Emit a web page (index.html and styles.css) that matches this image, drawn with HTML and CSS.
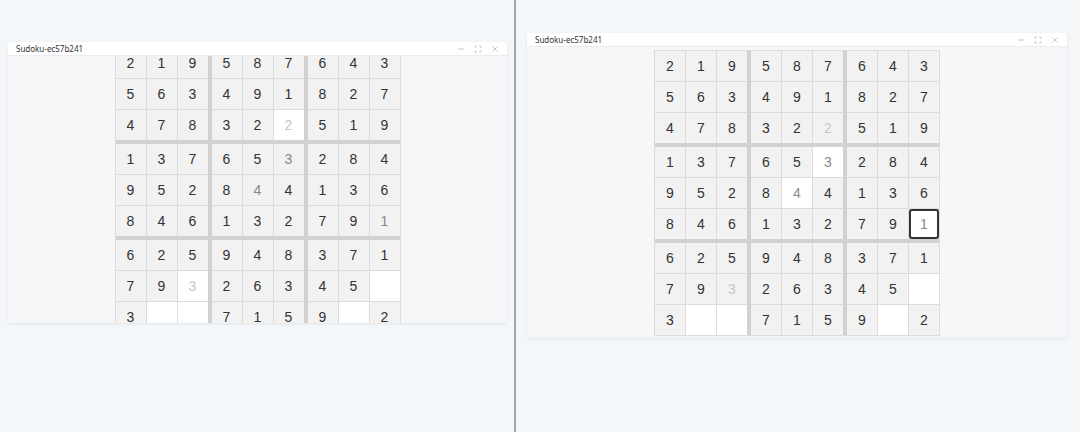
FILE: index.html
```html
<!DOCTYPE html>
<html lang="en">

<head>
    <meta charset="UTF-8">
    <title>Sudoku windows</title>
    <link rel="stylesheet" href="styles.css">
    <script>
        document.addEventListener("DOMContentLoaded", function () {
            const rows = [
                "219587643",
                "563491827",
                "478322519",
                "137653284",
                "952844136",
                "846132791",
                "625948371",
                "79326345.",
                "3..7159.2"
            ];
            const marks = {
                left: { "3,6": "open faint", "4,6": "soft", "5,5": "soft", "6,9": "soft", "8,3": "open faint" },
                right: { "3,6": "faint", "4,6": "open soft", "5,5": "open soft", "6,9": "open soft picked", "8,3": "faint" }
            };

            document.querySelectorAll('.board').forEach(board => {
                const set = marks[board.dataset.state];
                const boxes = [];
                for (let b = 0; b < 9; b++) {
                    const box = document.createElement('div');
                    box.classList.add('box');
                    board.appendChild(box);
                    boxes.push(box);
                }
                rows.forEach((row, r) => {
                    row.split('').forEach((ch, c) => {
                        const cell = document.createElement('div');
                        cell.className = 'cell';
                        if (ch === '.') {
                            cell.classList.add('open');
                        } else {
                            cell.textContent = ch;
                        }
                        const extra = set[(r + 1) + ',' + (c + 1)];
                        if (extra) extra.split(' ').forEach(k => cell.classList.add(k));
                        boxes[Math.floor(r / 3) * 3 + Math.floor(c / 3)].appendChild(cell);
                    });
                });
            });
        });
    </script>
</head>

<body>
    <div class="pane pane-left">
        <div class="window window-small">
            <div class="titlebar">
                <span class="title">Sudoku-ec57b241</span>
                <div class="controls">
                    <svg width="8" height="8" viewBox="0 0 8 8"><path d="M1 4h6" stroke="currentColor" stroke-width="0.9"/></svg>
                    <svg width="8" height="8" viewBox="0 0 8 8"><path d="M1 3V1h2M5 1h2v2M7 5v2H5M3 7H1V5" stroke="currentColor" stroke-width="0.8" fill="none"/></svg>
                    <svg width="8" height="8" viewBox="0 0 8 8"><path d="M1.5 1.5l5 5M6.5 1.5l-5 5" stroke="currentColor" stroke-width="0.9"/></svg>
                </div>
            </div>
            <div class="window-body">
                <div class="board" data-state="left"></div>
            </div>
        </div>
    </div>
    <div class="pane pane-right">
        <div class="window window-large">
            <div class="titlebar">
                <span class="title">Sudoku-ec57b241</span>
                <div class="controls">
                    <svg width="8" height="8" viewBox="0 0 8 8"><path d="M1 4h6" stroke="currentColor" stroke-width="0.9"/></svg>
                    <svg width="8" height="8" viewBox="0 0 8 8"><path d="M1 3V1h2M5 1h2v2M7 5v2H5M3 7H1V5" stroke="currentColor" stroke-width="0.8" fill="none"/></svg>
                    <svg width="8" height="8" viewBox="0 0 8 8"><path d="M1.5 1.5l5 5M6.5 1.5l-5 5" stroke="currentColor" stroke-width="0.9"/></svg>
                </div>
            </div>
            <div class="window-body">
                <div class="board" data-state="right"></div>
            </div>
        </div>
    </div>
</body>

</html>
```

FILE: styles.css
```css
body {
    margin: 0;
    padding: 0;
    height: 432px;
    display: flex;
    overflow: hidden;
    font-family: "Liberation Sans", Arial, sans-serif;
    background-color: #f4f7fa;
    color: #333;
}

.pane {
    height: 100%;
    box-sizing: border-box;
}

.pane-left {
    width: 516px;
    padding: 42px 0 0 8px;
    border-right: 2px solid #a2a4a7;
}

.pane-right {
    flex: 1;
    padding: 33px 0 0 11px;
}

.window {
    display: flex;
    flex-direction: column;
    background-color: #f7f7f9;
    border-radius: 3px;
    box-shadow: 0 1px 3px rgba(0, 0, 0, 0.08);
    overflow: hidden;
}

.window-small {
    width: 499px;
    height: 281px;
}

.window-large {
    width: 540px;
    height: 305px;
}

.titlebar {
    height: 13px;
    flex-shrink: 0;
    display: flex;
    align-items: center;
    justify-content: space-between;
    padding: 0 8px 0 8px;
    background-color: #fff;
    border-bottom: 1px solid #ececf0;
}

.title {
    font-family: "Noto Sans", sans-serif;
    font-size: 8px;
    color: #333;
}

.controls {
    display: flex;
    gap: 9px;
    color: #c0c2d0;
}

.window-body {
    flex: 1;
    display: flex;
    align-items: center;
    justify-content: center;
    overflow: hidden;
}

.board {
    flex-shrink: 0;
    display: grid;
    grid-template-columns: repeat(3, auto);
    gap: 4px;
    border: 1px solid #dcdcdc;
    background-color: #d2d2d2;
}

.box {
    display: grid;
    grid-template-columns: repeat(3, 30px);
    grid-template-rows: repeat(3, 30px);
    gap: 1px;
    background-color: #dcdcdc;
}

.cell {
    display: flex;
    align-items: center;
    justify-content: center;
    font-size: 14px;
    background-color: #f2f2f2;
    color: #333;
    box-sizing: border-box;
}

.cell.open {
    background-color: #fff;
}

.cell.faint {
    color: #c6c6c6;
}

.cell.soft {
    color: #888;
}

.cell.picked {
    border: 2px solid #333;
    border-radius: 3px;
}
```
